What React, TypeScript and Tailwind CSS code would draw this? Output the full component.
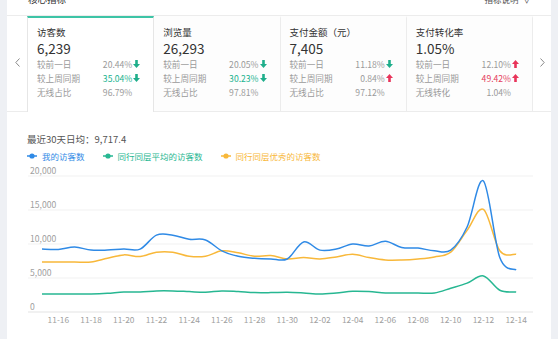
type Trend = "up" | "down" | null;

type Row = { label: string; value: string; tone?: "green" | "red"; trend?: Trend };

type Card = { title: string; value: string; rows: Row[] };

const cards: Card[] = [
  {
    title: "访客数",
    value: "6,239",
    rows: [
      { label: "较前一日", value: "20.44%", trend: "down" },
      { label: "较上周同期", value: "35.04%", tone: "green", trend: "down" },
      { label: "无线占比", value: "96.79%" },
    ],
  },
  {
    title: "浏览量",
    value: "26,293",
    rows: [
      { label: "较前一日", value: "20.05%", trend: "down" },
      { label: "较上周同期", value: "30.23%", tone: "green", trend: "down" },
      { label: "无线占比", value: "97.81%" },
    ],
  },
  {
    title: "支付金额（元）",
    value: "7,405",
    rows: [
      { label: "较前一日", value: "11.18%", trend: "down" },
      { label: "较上周同期", value: "0.84%", trend: "up" },
      { label: "无线占比", value: "97.12%" },
    ],
  },
  {
    title: "支付转化率",
    value: "1.05%",
    rows: [
      { label: "较前一日", value: "12.10%", trend: "up" },
      { label: "较上周同期", value: "49.42%", tone: "red", trend: "up" },
      { label: "无线转化", value: "1.04%" },
    ],
  },
];

const mine = [9260, 9200, 9560, 9100, 9100, 9250, 9250, 11300, 11300, 10700, 10600, 9000, 8200, 7900, 7800, 7800, 10300, 9100, 9250, 10000, 9700, 10400, 9500, 9400, 9000, 9100, 12500, 19260, 8000, 6200];
const best = [7350, 7350, 7350, 7350, 7900, 8400, 8150, 8800, 8800, 8200, 8200, 9000, 8700, 8200, 8300, 7800, 8000, 7800, 8100, 8500, 8000, 7650, 7650, 7800, 8100, 8800, 12000, 15100, 9000, 8500];
const avg = [2650, 2650, 2650, 2650, 2750, 2950, 2950, 3100, 3100, 3000, 2900, 3100, 3000, 2850, 2850, 2900, 2800, 2650, 2800, 3050, 3000, 2800, 2800, 2800, 2800, 3500, 4250, 5300, 3200, 2950];

const dates = ["11-16", "11-18", "11-20", "11-22", "11-24", "11-26", "11-28", "11-30", "12-02", "12-04", "12-06", "12-08", "12-10", "12-12", "12-14"];

const px = (i: number) => 42 + i * 16.35;
const py = (v: number) => 312 - v * 0.0068;

// catmull-rom -> bezier
function smooth(data: number[]) {
  const pts = data.map((v, i) => [px(i), py(v)]);
  let d = `M${pts[0][0]},${pts[0][1]}`;
  for (let i = 0; i < pts.length - 1; i++) {
    const p0 = pts[i - 1] ?? pts[i];
    const p1 = pts[i];
    const p2 = pts[i + 1];
    const p3 = pts[i + 2] ?? p2;
    const c1x = p1[0] + (p2[0] - p0[0]) / 6;
    const c1y = p1[1] + (p2[1] - p0[1]) / 6;
    const c2x = p2[0] - (p3[0] - p1[0]) / 6;
    const c2y = p2[1] - (p3[1] - p1[1]) / 6;
    d += ` C${c1x},${c1y} ${c2x},${c2y} ${p2[0]},${p2[1]}`;
  }
  return d;
}

function Arrow({ dir }: { dir: "up" | "down" }) {
  const color = dir === "up" ? "#e8345a" : "#1fae8b";
  return (
    <svg width="7" height="8" viewBox="0 0 7 8" className="ml-[1px]">
      {dir === "down" ? (
        <path d="M2.2 0h2.6v4h2.2L3.5 8 0 4h2.2z" fill={color} />
      ) : (
        <path d="M2.2 8h2.6V4h2.2L3.5 0 0 4h2.2z" fill={color} />
      )}
    </svg>
  );
}

function Chevron({ dir }: { dir: "left" | "right" }) {
  return (
    <svg width="5" height="9" viewBox="0 0 5 9">
      <polyline
        points={dir === "left" ? "4.5,0.5 0.8,4.5 4.5,8.5" : "0.5,0.5 4.2,4.5 0.5,8.5"}
        fill="none"
        stroke="#8a8a8a"
        strokeWidth="1"
      />
    </svg>
  );
}

function MetricCard({ card, active }: { card: Card; active?: boolean }) {
  return (
    <div
      className={`flex-1 border-t-2 pl-[9px] pr-[13px] pt-[8px] ${
        active
          ? "border-t-[#3dc4a6] border-x border-x-[#e6e6e6] bg-white"
          : "border-t-transparent border-b border-b-[#ececec] border-r border-r-[#ececec] bg-[#fdfdfd]"
      }`}
    >
      <div className="text-[9.5px] leading-[13px] text-[#333]">{card.title}</div>
      <div className="text-[13.5px] leading-[18px] text-[#333]">{card.value}</div>
      {card.rows.map((r) => (
        <div key={r.label} className="flex items-center justify-between text-[8.6px] leading-[14px] text-[#9a9a9a]">
          <span>{r.label}</span>
          <span className="flex items-center">
            <span className={r.tone === "green" ? "text-[#22b38f]" : r.tone === "red" ? "text-[#e5405e]" : ""}>
              {r.value}
            </span>
            {r.trend ? <Arrow dir={r.trend} /> : <span className="w-[8px]" />}
          </span>
        </div>
      ))}
    </div>
  );
}

function Legend({ color, text }: { color: string; text: string }) {
  return (
    <div className="flex items-center gap-[5px]" style={{ color }}>
      <svg width="10" height="6" viewBox="0 0 10 6">
        <line x1="0" y1="3" x2="10" y2="3" stroke={color} strokeWidth="1.5" />
        <circle cx="5" cy="3" r="2.6" fill={color} />
      </svg>
      <span>{text}</span>
    </div>
  );
}

function Chart() {
  const grid = [0, 5000, 10000, 15000, 20000];
  return (
    <svg width="544" height="176" viewBox="7 163 544 176" className="block">
      {grid.map((g) => (
        <g key={g}>
          <line x1="28" x2="533" y1={py(g)} y2={py(g)} stroke={g === 0 ? "#e3e3e3" : "#f1f1f1"} strokeWidth="1" />
          <text x="30" y={py(g) - 2} fontSize="8.6" fill="#a0a0a0">
            {g === 0 ? "0" : g.toLocaleString("en-US")}
          </text>
        </g>
      ))}
      {dates.map((d, k) => (
        <text key={d} x={px(k * 2 + 1)} y="323" fontSize="8.4" fill="#a0a0a0" textAnchor="middle">
          {d}
        </text>
      ))}
      <path d={smooth(avg)} fill="none" stroke="#27b792" strokeWidth="1.5" />
      <path d={smooth(best)} fill="none" stroke="#f8b83a" strokeWidth="1.5" />
      <path d={smooth(mine)} fill="none" stroke="#2f8ae6" strokeWidth="1.5" />
    </svg>
  );
}

export default function App() {
  return (
    <div className="flex h-[339px] w-[558px] overflow-hidden bg-[#eef0f4] pl-[7px] pr-[7px] font-['Noto_Sans_CJK_SC','Noto_Sans',sans-serif]">
      <div className="flex flex-1 flex-col bg-white">
        <div className="flex h-[16px] items-start justify-between overflow-hidden border-b border-b-[#ececec] pl-[21px] pr-[20px]">
          <div className="-mt-[8px] text-[9.5px] leading-[14px] text-[#333]">核心指标</div>
          <div className="-mt-[8px] flex items-center gap-[4px] text-[8.5px] leading-[14px] text-[#555]">
            <span>指标说明</span>
            <span>∨</span>
          </div>
        </div>
        <div className="flex h-[96px]">
          <div className="flex w-[20px] items-center justify-center border-b border-b-[#ececec] pb-[2px]">
            <Chevron dir="left" />
          </div>
          {cards.map((c, i) => (
            <MetricCard key={c.title} card={c} active={i === 0} />
          ))}
          <div className="flex w-[18px] items-center justify-center border-b border-b-[#ececec] pb-[2px]">
            <Chevron dir="right" />
          </div>
        </div>
        <div className="pl-[20px] pt-[20px]">
          <div className="text-[9.5px] leading-[14px] text-[#555]">最近30天日均：9,717.4</div>
          <div className="mt-[3px] flex gap-[18px] text-[8.5px] leading-[14px]">
            <Legend color="#2f8ae6" text="我的访客数" />
            <Legend color="#27b792" text="同行同层平均的访客数" />
            <Legend color="#f8b83a" text="同行同层优秀的访客数" />
          </div>
        </div>
        <Chart />
      </div>
    </div>
  );
}
